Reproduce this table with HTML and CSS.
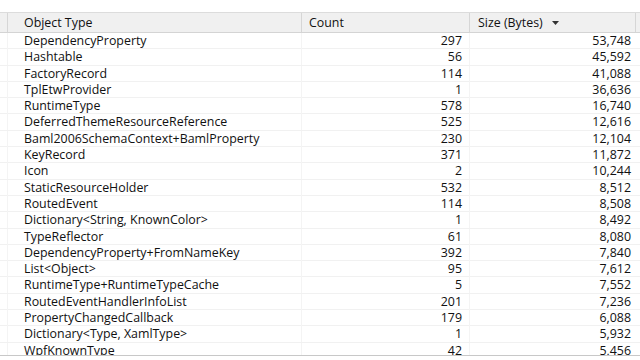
FILE: index.html
```html
<!DOCTYPE html>
<html>
<head>
<meta charset="utf-8">
<link rel="stylesheet" href="styles.css">
</head>
<body>
<div class="grid">
  <div class="head">
    <div class="hc stub"></div>
    <div class="hc name">Object Type</div>
    <div class="hc count">Count</div>
    <div class="hc size">Size (Bytes) <svg class="arrow" width="7" height="4" viewBox="0 0 7 4"><path d="M0 0H7L3.5 4Z" fill="#333"/></svg></div>
  </div>
  <div class="body">
    <div class="row"><div class="stub"></div><div class="name">DependencyProperty</div><div class="num c">297</div><div class="num s">53,748</div></div>
    <div class="row"><div class="stub"></div><div class="name">Hashtable</div><div class="num c">56</div><div class="num s">45,592</div></div>
    <div class="row"><div class="stub"></div><div class="name">FactoryRecord</div><div class="num c">114</div><div class="num s">41,088</div></div>
    <div class="row"><div class="stub"></div><div class="name">TplEtwProvider</div><div class="num c">1</div><div class="num s">36,636</div></div>
    <div class="row"><div class="stub"></div><div class="name">RuntimeType</div><div class="num c">578</div><div class="num s">16,740</div></div>
    <div class="row"><div class="stub"></div><div class="name">DeferredThemeResourceReference</div><div class="num c">525</div><div class="num s">12,616</div></div>
    <div class="row"><div class="stub"></div><div class="name">Baml2006SchemaContext+BamlProperty</div><div class="num c">230</div><div class="num s">12,104</div></div>
    <div class="row"><div class="stub"></div><div class="name">KeyRecord</div><div class="num c">371</div><div class="num s">11,872</div></div>
    <div class="row"><div class="stub"></div><div class="name">Icon</div><div class="num c">2</div><div class="num s">10,244</div></div>
    <div class="row"><div class="stub"></div><div class="name">StaticResourceHolder</div><div class="num c">532</div><div class="num s">8,512</div></div>
    <div class="row"><div class="stub"></div><div class="name">RoutedEvent</div><div class="num c">114</div><div class="num s">8,508</div></div>
    <div class="row"><div class="stub"></div><div class="name">Dictionary&lt;String, KnownColor&gt;</div><div class="num c">1</div><div class="num s">8,492</div></div>
    <div class="row"><div class="stub"></div><div class="name">TypeReflector</div><div class="num c">61</div><div class="num s">8,080</div></div>
    <div class="row"><div class="stub"></div><div class="name">DependencyProperty+FromNameKey</div><div class="num c">392</div><div class="num s">7,840</div></div>
    <div class="row"><div class="stub"></div><div class="name">List&lt;Object&gt;</div><div class="num c">95</div><div class="num s">7,612</div></div>
    <div class="row"><div class="stub"></div><div class="name">RuntimeType+RuntimeTypeCache</div><div class="num c">5</div><div class="num s">7,552</div></div>
    <div class="row"><div class="stub"></div><div class="name">RoutedEventHandlerInfoList</div><div class="num c">201</div><div class="num s">7,236</div></div>
    <div class="row"><div class="stub"></div><div class="name">PropertyChangedCallback</div><div class="num c">179</div><div class="num s">6,088</div></div>
    <div class="row"><div class="stub"></div><div class="name">Dictionary&lt;Type, XamlType&gt;</div><div class="num c">1</div><div class="num s">5,932</div></div>
    <div class="row"><div class="stub"></div><div class="name">WpfKnownType</div><div class="num c">42</div><div class="num s">5,456</div></div>
  </div>
</div>
</body>
</html>
```
FILE: styles.css
```css
html, body {
  margin: 0;
  padding: 0;
  background: #ffffff;
}
body {
  font-family: "Open Sans", "Noto Sans", sans-serif;
  font-size: 12.4px;
  color: #111111;
  padding-top: 12px;
}
.grid {
  width: 640px;
  height: 343px;
  overflow: hidden;
  border-bottom: 1px solid #c8c8c8;
}
.head, .row {
  display: grid;
  grid-template-columns: 8px 294px 168px 166px;
}
.head {
  height: 19px;
  background: #f0f0f0;
  border-top: 1px solid #dcdcdc;
  border-bottom: 1px solid #d4d4d4;
}
.hc {
  display: flex;
  align-items: center;
  border-right: 1px solid #d6d6d6;
  color: #111111;
}
.hc.name { padding-left: 16px; }
.hc.count { padding-left: 7px; }
.hc.size { padding-left: 8px; gap: 9px; }
.arrow { margin-top: 1px; }
.row {
  height: 16.3px;
  line-height: 16px;
  box-sizing: border-box;
  border-bottom: 1px solid #f1f1f1;
}
.row > div {
  border-right: 1px solid #f4f4f4;
  white-space: nowrap;
}
.row .name { padding-left: 16px; }
.num { text-align: right; }
.num.c { padding-right: 7px; }
.num.s { padding-right: 5px; border-right: none; }
```
